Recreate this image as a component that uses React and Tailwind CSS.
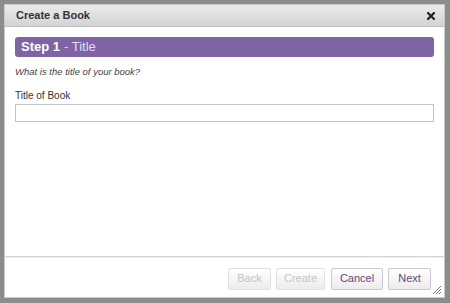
import React from "react";

function ResizeGrip() {
  return (
    <svg width="10" height="10" viewBox="0 0 10 10" className="absolute right-[2px] bottom-[2px]">
      <path d="M9 1 L1 9 M9 4 L4 9 M9 7 L7 9" stroke="#777" strokeWidth="1" />
    </svg>
  );
}

function CloseIcon() {
  return (
    <svg width="8" height="8" viewBox="0 0 8 8">
      <path d="M1 1 L7 7 M7 1 L1 7" stroke="#222" strokeWidth="2.2" strokeLinecap="square" />
    </svg>
  );
}

export default function App() {
  const btn =
    "h-[22px] rounded-[2px] border text-[11px] bg-gradient-to-b from-white to-[#ececec]";

  return (
    <div className="w-[450px] h-[303px] bg-[#8c8c8c] p-[4px] pr-[5px] pb-[5px] font-['Liberation_Sans',Arial,sans-serif]">
      <div className="relative h-full flex flex-col bg-white border border-[#c9c9c9]">
        <div className="h-[22px] flex items-center justify-between pl-[11px] pr-[9px] bg-gradient-to-b from-[#ebebeb] to-[#d3d3d3] border-b border-[#bdbdbd]">
          <span className="text-[11px] font-bold text-[#333]">Create a Book</span>
          <CloseIcon />
        </div>

        <div className="flex-1 px-[10px] pt-[10px]">
          <div className="h-[20px] flex items-center px-[6px] rounded-[3px] bg-[#7e63a5] text-white text-[13px]">
            <span className="font-bold">Step 1</span>
            <span className="ml-[4px] text-[#e6dcf3]">- Title</span>
          </div>
          <p className="mt-[8px] text-[9.5px] italic text-[#444]">What is the title of your book?</p>
          <p className="mt-[9px] text-[10px] text-[#333]">Title of Book</p>
          <div className="mt-[1px] h-[18px] border border-[#c4c4c4] bg-white" />
        </div>

        <div className="h-[2px] bg-[#d4d4d4] border-b border-[#eee] mx-0" />

        <div className="h-[39px] flex items-center justify-end gap-[5px] pr-[13px] pt-[2px]">
          <button className={btn + " w-[43px] border-[#e2e2e2] text-[#c4c4c4]"}>Back</button>
          <button className={btn + " w-[49px] border-[#e2e2e2] text-[#c4c4c4]"}>Create</button>
          <button className={btn + " w-[52px] border-[#cdc6d6] text-[#5b4a7b] ml-[1px]"}>Cancel</button>
          <button className={btn + " w-[43px] border-[#cdc6d6] text-[#5b4a7b]"}>Next</button>
        </div>
        <ResizeGrip />
      </div>
    </div>
  );
}
